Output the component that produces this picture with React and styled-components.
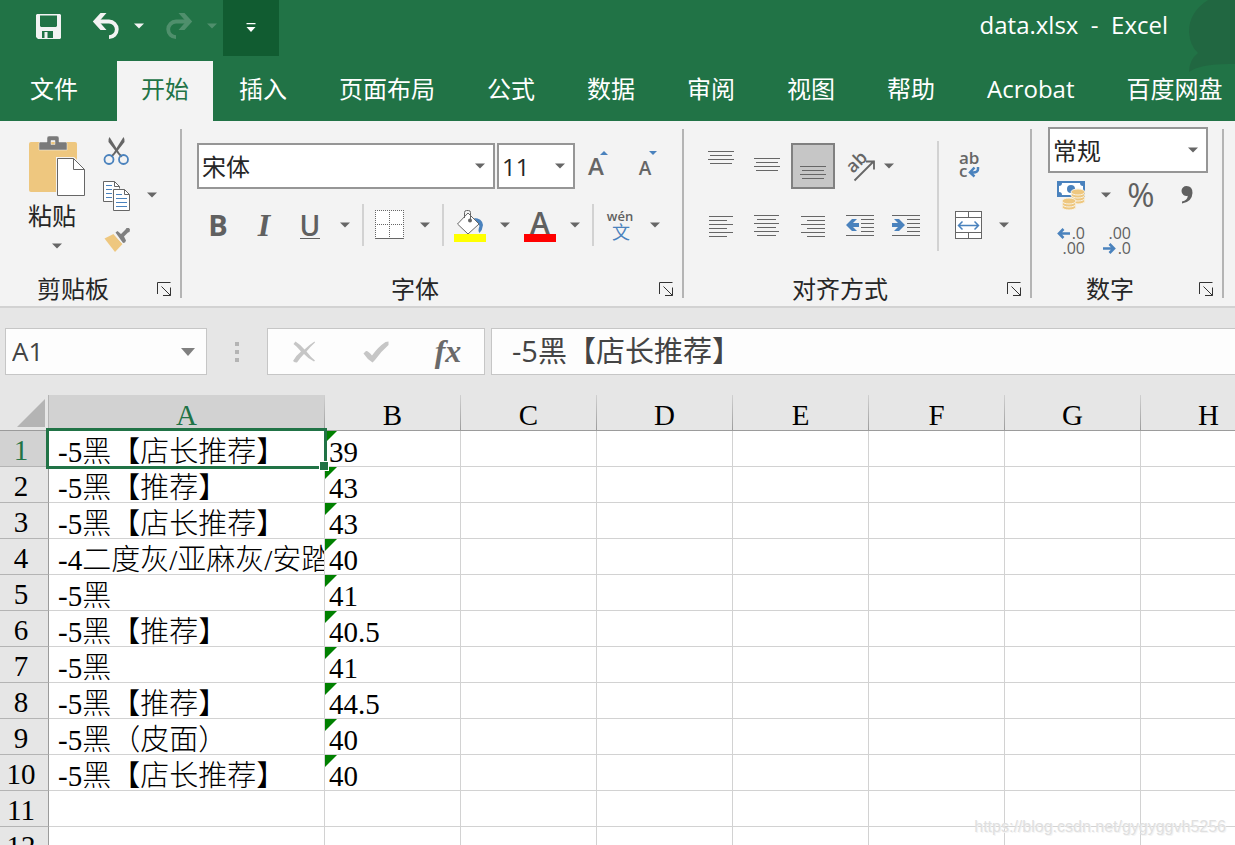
import React from 'react';
import styled, { createGlobalStyle, css } from 'styled-components';

const uiFont = `'Open Sans', 'Noto Sans CJK SC', sans-serif`;
const cellFont = `'Liberation Serif', 'Noto Sans CJK SC', serif`;

const green = '#217346';
const grey = '#666666';
const blue = '#4a82bd';
const tan = '#eec77f';

const GlobalStyle = createGlobalStyle`
  *, *::before, *::after {
    box-sizing: border-box;
  }
  body {
    margin: 0;
    background: #ffffff;
  }
  button, input, select {
    font-family: inherit;
    margin: 0;
  }
`;

const Window = styled.div`
  position: relative;
  display: flex;
  flex-direction: column;
  height: 100vh;
  overflow: hidden;
  font-family: ${uiFont};
  font-size: 24px;
  line-height: 32px;
  color: #262626;
`;

/* ---------- title bar and tabs ---------- */

const Header = styled.header`
  position: relative;
  flex: none;
  background: ${green};
  color: #ffffff;
`;

const Ornament = styled.svg`
  position: absolute;
  top: 0;
  right: 0;
`;

const TitleBar = styled.div`
  position: relative;
  display: flex;
  justify-content: space-between;
  height: 61px;
  padding-right: 67px;
`;

const QuickAccess = styled.div`
  display: flex;
  height: 56px;
  padding-left: 25px;
`;

const QuickButton = styled.button`
  display: flex;
  align-items: center;
  justify-content: center;
  width: ${({ $width }) => $width}px;
  height: 100%;
  margin-left: ${({ $gap = 0 }) => $gap}px;
  padding: 0 0 ${({ $dark }) => ($dark ? 0 : 4)}px;
  border: 0;
  background: ${({ $dark }) => ($dark ? '#115c31' : 'transparent')};
  opacity: ${({ disabled }) => (disabled ? 0.22 : 1)};
`;

const WindowTitle = styled.h1`
  margin: 0;
  padding-top: 9px;
  font-size: 24px;
  font-weight: 400;
  line-height: 32px;
  white-space: pre;
`;

const Tabs = styled.nav`
  position: relative;
  display: flex;
  height: 60px;
`;

const Tab = styled.a`
  padding: 0 26px;
  line-height: 56px;
  color: #ffffff;
  text-decoration: none;
  white-space: nowrap;
  ${({ $file }) =>
    $file &&
    css`
      padding: 0 39px 0 30px;
    `}
  ${({ $active }) =>
    $active &&
    css`
      padding: 0 24px;
      background: #f3f3f3;
      color: ${green};
    `}
`;

/* ---------- ribbon ---------- */

const Ribbon = styled.div`
  display: flex;
  flex: none;
  height: 187px;
  background: #f3f3f3;
  border-bottom: 2px solid #d2d2d2;
`;

const Group = styled.section`
  display: flex;
  flex: none;
  flex-direction: column;
`;

const GroupBody = styled.div`
  display: flex;
  flex: 1;
  align-items: flex-start;
  padding: ${({ $padding }) => $padding};
`;

const GroupFooter = styled.div`
  display: flex;
  align-items: center;
  height: 34px;
`;

const GroupLabel = styled.span`
  flex: 1;
  text-align: center;
`;

const Launcher = styled.button`
  display: flex;
  align-items: center;
  width: 34px;
  height: 34px;
  padding: 0 0 0 11px;
  border: 0;
  background: none;
`;

const Divider = styled.div`
  flex: none;
  width: 2px;
  margin: 8px 0;
  background: #b4b4b4;
`;

const Separator = styled.div`
  flex: none;
  width: 2px;
  height: ${({ $tall }) => ($tall ? '110px' : '42px')};
  margin: ${({ $tall }) => ($tall ? '0 7px 0 10px' : '0 3px 0 5px')};
  background: #d2d2d2;
`;

const Rows = styled.div`
  display: flex;
  flex-direction: column;
  gap: ${({ $gap = 0 }) => $gap}px;
`;

const Row = styled.div`
  display: flex;
  align-items: center;
  gap: ${({ $gap = 0 }) => $gap}px;
`;

const AlignRows = styled(Rows)`
  padding-top: 2px;
`;

const ToolButton = styled.button`
  display: flex;
  flex: none;
  align-items: center;
  justify-content: center;
  width: 46px;
  height: ${({ $short }) => ($short ? 44 : 46)}px;
  padding: 0;
  border: 0;
  background: none;
  color: #606060;
  line-height: 32px;
  ${({ $pressed }) =>
    $pressed &&
    css`
      width: 44px;
      margin-left: 2px;
      background: #c6c6c6;
      border: 2px solid #808080;
    `}
`;

const CaretButton = styled.button`
  display: flex;
  flex: none;
  align-items: center;
  justify-content: center;
  width: ${({ $narrow }) => ($narrow ? 16 : 24)}px;
  height: 44px;
  padding: 0;
  border: 0;
  background: none;
`;

const CopyMenu = styled(CaretButton)`
  margin: 38px 0 0 8px;
`;

const Bold = styled.span`
  font-size: 29px;
  font-weight: 700;
`;

const Italic = styled.span`
  font-family: 'Liberation Serif', serif;
  font-size: 32px;
  font-style: italic;
  font-weight: 700;
`;

const Underline = styled.span`
  font-size: 28px;
  font-weight: 600;
  line-height: 26px;
  border-bottom: 1px solid #606060;
`;

const Percent = styled.span`
  font-size: 33px;
`;

const PasteButton = styled.button`
  display: flex;
  flex-direction: column;
  align-items: flex-start;
  width: 58px;
  padding: 0;
  border: 0;
  background: none;
  color: #262626;
  font-size: 24px;
  line-height: 38px;
`;

const PasteCaret = styled.span`
  display: flex;
  align-self: center;
  align-items: center;
  height: 22px;
`;

const SmallButton = styled.button`
  display: flex;
  align-items: center;
  justify-content: center;
  width: 30px;
  height: 30px;
  padding: 0;
  border: 0;
  background: none;
`;

const FontBoxes = styled.div`
  display: flex;
  gap: 2px;
  padding-left: 2px;
`;

const SelectBox = styled.div`
  position: relative;
  width: ${({ $width }) => $width}px;
`;

const Select = styled.select`
  width: 100%;
  height: 46px;
  padding: 0 24px 0 3px;
  border: 2px solid #969696;
  border-radius: 0;
  background: #ffffff;
  color: #262626;
  font-size: 24px;
  appearance: none;
`;

const SelectCaret = styled.span`
  position: absolute;
  top: 0;
  right: 10px;
  display: flex;
  align-items: center;
  height: 100%;
  pointer-events: none;
`;

/* ---------- formula bar ---------- */

const FormulaBar = styled.div`
  display: flex;
  flex: none;
  padding: 20px 0 20px 5px;
  background: #e6e6e6;
`;

const BarBox = styled.div`
  display: flex;
  align-items: center;
  height: 47px;
  border: 1px solid #c6c6c6;
  background: #fdfdfd;
  ${({ $kind }) =>
    $kind === 'name' &&
    css`
      width: 202px;
    `}
  ${({ $kind }) =>
    $kind === 'buttons' &&
    css`
      width: 218px;
      margin-right: 6px;
      justify-content: space-around;
    `}
  ${({ $kind }) =>
    $kind === 'formula' &&
    css`
      flex: 1;
      border-right: 0;
    `}
`;

const BarInput = styled.input`
  flex: 1;
  width: 0;
  min-width: 0;
  height: 45px;
  padding: ${({ $large }) => ($large ? '0 0 5px 20px' : '0 0 1px 6px')};
  border: 0;
  background: none;
  color: #444444;
  font-size: ${({ $large }) => ($large ? 29 : 26)}px;
`;

const BarButton = styled.button`
  display: flex;
  align-items: center;
  justify-content: center;
  width: ${({ $narrow }) => ($narrow ? 36 : 60)}px;
  height: 45px;
  padding: 0;
  border: 0;
  background: none;
`;

const Fx = styled.span`
  font-family: 'Liberation Serif', serif;
  font-size: 32px;
  font-style: italic;
  font-weight: 700;
  color: #6a6a6a;
`;

const Grip = styled.div`
  display: flex;
  flex-direction: column;
  align-items: center;
  justify-content: center;
  gap: 4px;
  width: 60px;
`;

const Dot = styled.span`
  width: 4px;
  height: 4px;
  background: #b4b4b4;
`;

/* ---------- sheet ---------- */

const SheetArea = styled.main`
  flex: 1;
  min-height: 0;
  overflow: hidden;
`;

const Sheet = styled.table`
  width: 1413px;
  table-layout: fixed;
  border-collapse: separate;
  border-spacing: 0;
  font-family: ${cellFont};
  font-size: 29px;
  font-weight: 300;
  color: #000000;
`;

const Col = styled.col`
  width: ${({ $width }) => $width}px;
`;

const Corner = styled.td`
  height: 36px;
  padding: 0;
  background: #e6e6e6;
  border-right: 1px solid #b4b4b4;
  border-bottom: 1px solid #9b9b9b;
`;

const CornerMark = styled.svg`
  display: block;
  margin: 0 3px 0 auto;
`;

const ColumnHead = styled.th`
  height: 36px;
  padding: 6px 0 0;
  line-height: 29px;
  font-weight: 400;
  color: ${({ $active }) => ($active ? green : '#000000')};
  background: ${({ $active }) => ($active ? '#d2d2d2' : '#e6e6e6')};
  border-right: 1px solid;
  border-image: linear-gradient(#d2d2d2, #9b9b9b) 1;
  border-bottom: 1px solid #9b9b9b;
`;

const RowHead = styled.th`
  height: 36px;
  padding: 4px 6px 0 0;
  line-height: 31px;
  font-weight: 400;
  text-align: center;
  color: ${({ $active }) => ($active ? green : '#000000')};
  background: ${({ $active }) => ($active ? '#d2d2d2' : '#e6e6e6')};
  border-right: 1px solid #9b9b9b;
  border-bottom: 1px solid #b4b4b4;
`;

const Cell = styled.td`
  position: relative;
  height: 36px;
  padding: 0;
  border-right: 1px solid #d2d2d2;
  border-bottom: 1px solid #d2d2d2;
`;

const CellText = styled.div`
  height: 35px;
  padding: 4px 0 0 ${({ $first }) => ($first ? 9 : 4)}px;
  line-height: 34px;
  overflow: hidden;
  white-space: nowrap;
`;

const ErrorMark = styled.span`
  position: absolute;
  top: 0;
  left: 0;
  border-top: 12px solid #008000;
  border-right: 12px solid transparent;
`;

const Selection = styled.div`
  position: absolute;
  z-index: 1;
  inset: -3px;
  border: 3px solid ${green};
`;

const FillHandle = styled.span`
  position: absolute;
  right: -5px;
  bottom: -5px;
  width: 10px;
  height: 10px;
  border: 1px solid #ffffff;
  background: ${green};
`;

const Watermark = styled.div`
  position: absolute;
  right: 9px;
  bottom: 8px;
  font-family: 'Liberation Sans', sans-serif;
  font-size: 16px;
  line-height: 20px;
  color: #e0e0e0;
  text-shadow: 1px 1px 0 #f4f4f4;
`;

/* ---------- icons ---------- */

const Caret = ({ color = grey }) => (
  <svg width="10" height="6" viewBox="0 0 10 6">
    <path d="M0 0.5h10L5 5.5z" fill={color} />
  </svg>
);

const SaveIcon = () => (
  <svg width="25" height="25" viewBox="0 0 25 25">
    <path
      fillRule="evenodd"
      fill="#f3f3f3"
      d="M1 0h23l1 1v23l-1 1H2l-2-2V1zM4 1.500v10.500l1 1h15l1-1V1.500zM6 17v7h2.500v-6h3v6H17v-7z"
    />
  </svg>
);

const UndoIcon = ({ flip }) => (
  <svg width="28" height="28" viewBox="0 0 28 28" fill="none" stroke="#f3f3f3" strokeWidth="3.800">
    <g transform={flip ? 'translate(28 0) scale(-1 1)' : undefined}>
      <path d="M3.500 9.500H17a7.800 7.800 0 0 1 0 15.600" />
      <path d="M0.800 9.500 8.500 1h6L7 9.500l7.500 8.500h-6z" fill="#f3f3f3" stroke="none" />
    </g>
  </svg>
);

const CustomizeIcon = () => (
  <svg width="10" height="10" viewBox="0 0 10 10" fill="#ffffff">
    <path d="M0.500 0h9v1.200h-9zM0.500 4h9L5 9z" />
  </svg>
);

const LauncherIcon = () => (
  <svg width="15" height="15" viewBox="0 0 15 15" fill="none" stroke="#333333">
    <path d="M0.500 12V0.500H13.500M13.500 5.500v8H6M4.500 4.500l9 9" />
  </svg>
);

const PasteIcon = () => (
  <svg width="58" height="62" viewBox="0 0 58 62">
    <rect x="1" y="7" width="48" height="50" rx="2" fill={tan} />
    <path
      fillRule="evenodd"
      d="M11 15V8.500q0-1.500 1.500-1.500H19V3q0-2 2-2h8q2 0 2 2v4h6.500q1.500 0 1.500 1.500V15zM23 5.500h4v4h-4z"
      fill="#7a7a7a"
      stroke="#f3f3f3"
      strokeWidth="0.500"
    />
    <path d="M28 22h18l12 12v28H28z" fill="#f3f3f3" />
    <path d="M29.500 23.500h16l11 11v26h-27z" fill="#ffffff" stroke={grey} />
    <path d="M45.500 23.500v11h11" fill="none" stroke={grey} />
  </svg>
);

const CutIcon = () => (
  <svg width="30" height="30" viewBox="0 0 30 30">
    <path d="M7.500 1 17.500 17l3 3-1.500 1.500-3.500-4L6.500 6Q6 3 7.500 1z" fill={grey} />
    <path d="M21.500 1 11.500 17l-3 3 1.500 1.500 3.500-4L22.500 6Q23 3 21.500 1z" fill={grey} />
    <circle cx="7" cy="23.500" r="4.500" fill="none" stroke={blue} strokeWidth="1.800" />
    <circle cx="21.500" cy="23.500" r="4.500" fill="none" stroke={blue} strokeWidth="1.800" />
  </svg>
);

const CopyIcon = () => (
  <svg width="30" height="32" viewBox="0 0 30 32">
    <path d="M1.500 1.500h11l5 5v15h-16z" fill="#ffffff" stroke={grey} />
    <path d="M12.500 1.500v5h5" fill="none" stroke={grey} />
    <path d="M4 5.500h6M4 9.500h6M4 13.500h6M4 17.500h6" stroke={blue} />
    <path d="M10.500 8.500h18v22h-18z" fill="#f3f3f3" />
    <path d="M11.500 9.500h11l5 5v16h-16z" fill="#ffffff" stroke={grey} />
    <path d="M22.500 9.500v5h5" fill="none" stroke={grey} />
    <path d="M14 14.500h6M14 18.500h11M14 22.500h11M14 26.500h11" stroke={blue} />
  </svg>
);

const BrushIcon = () => (
  <svg width="30" height="30" viewBox="0 0 30 30">
    <path d="m2.500 12.500 9-4.500 9 10L13 26z" fill={tan} />
    <path
      d="m13.500 6.500 2-1.500 3.500 3 4.500-4.500 1-1.500h2.500l1 1.500-.5 2.500-1.500.5L22 10.500l2 4-1 2-2 .5z"
      fill="#808080"
    />
    <path d="m11.500 7.500 10 11" stroke="#f3f3f3" strokeWidth="1" />
  </svg>
);

const BordersIcon = () => (
  <svg width="30" height="30" viewBox="0 0 30 30" fill="none" stroke={grey}>
    <rect x="0.500" y="0.500" width="28" height="28" fill="#ffffff" stroke="none" />
    <path d="M0 0.500h29M0 14.500h29M0.500 0v28M14.500 0v28M28.500 0v28" strokeDasharray="1 1" />
    <path d="M0 28.500h29" />
  </svg>
);

const FillIcon = () => (
  <svg width="32" height="34" viewBox="0 0 32 34">
    <path d="M20 10q8 0 9 7-.5 5-3.500 8-2-2 0-7z" fill={blue} />
    <path d="M14 5 25 16 14 26 3.500 16z" fill="#ffffff" stroke={grey} />
    <path d="M10.500 10V4.500q0-2 2-2h2q2 0 2 2V11" fill="none" stroke={grey} />
    <circle cx="16" cy="12.500" r="2" fill={grey} />
    <rect y="26" width="32" height="8" fill="#ffff00" />
  </svg>
);

const FontColorIcon = () => (
  <svg width="32" height="34" viewBox="0 0 32 34" overflow="visible">
    <text x="16" y="26" textAnchor="middle" fontFamily="Open Sans" fontWeight="600" fontSize="30" fill="#606060">
      A
    </text>
    <rect y="26" width="32" height="8" fill="#ff0000" />
  </svg>
);

const FontSizeIcon = ({ shrink }) => (
  <svg width="32" height="32" viewBox="0 0 32 32">
    <text
      x={shrink ? 17 : 14}
      y="25"
      textAnchor="middle"
      fontFamily="Open Sans"
      fontWeight="600"
      fontSize={shrink ? 19 : 24}
      fill={grey}
    >
      A
    </text>
    <path d={shrink ? 'M21 1h8l-4 4z' : 'M18 5h8l-4-4z'} fill={blue} />
  </svg>
);

const PhoneticIcon = () => (
  <svg width="32" height="34" viewBox="0 0 32 34" overflow="visible">
    <text x="16" y="13" textAnchor="middle" fontFamily="Open Sans" fontWeight="600" fontSize="13" fill="#606060">
      wén
    </text>
    <text x="17" y="31" textAnchor="middle" fontFamily="Noto Sans CJK SC" fontSize="18" fill={blue}>
      文
    </text>
  </svg>
);

const LinesIcon = ({ lines, top, arrow }) => (
  <svg width="32" height="32" viewBox="0 0 32 32" overflow="visible">
    {lines.map(([from, to], i) => (
      <rect key={i} x={from} y={top + i * 4} width={to - from} height="1" fill={grey} />
    ))}
    {arrow === 'left' && <path d="M4 16l6-6h5l-4 4h6v4h-6l4 4h-5z" fill={blue} />}
    {arrow === 'right' && <path d="M17 16l-6-6H6l4 4H4v4h6l-4 4h5z" fill={blue} />}
  </svg>
);

const OrientationIcon = () => (
  <svg width="32" height="32" viewBox="0 0 32 32" overflow="visible">
    <text x="11" y="24" transform="rotate(-45 11 24)" fontFamily="Open Sans" fontWeight="600" fontSize="18" fill={grey}>
      ab
    </text>
    <path d="M12.500 30.500 32 11M24 11.500h8v8" fill="none" stroke={grey} strokeWidth="1.800" />
  </svg>
);

const WrapIcon = () => (
  <svg width="32" height="32" viewBox="0 0 32 32" overflow="visible">
    <text x="6" y="14" fontFamily="Open Sans" fontWeight="600" fontSize="17" fill={grey}>
      ab
    </text>
    <text x="6" y="27" fontFamily="Open Sans" fontWeight="600" fontSize="17" fill={grey}>
      c
    </text>
    <path d="M25 17v2q0 3.500-5 3.500h-2M21.500 17.500 17 22.500l4.500 4" fill="none" stroke={blue} strokeWidth="2.500" />
  </svg>
);

const MergeIcon = () => (
  <svg width="28" height="30" viewBox="0 0 28 30" fill="none" stroke={grey}>
    <rect x="0.500" y="1.500" width="26" height="27" fill="#ffffff" />
    <path d="M0.500 7.500h26M0.500 22.500h26M13.500 1.500v6M13.500 22.500v6" />
    <path d="M4 15.500h19M7.500 11.500l-4 4 4 4M19.500 11.500l4 4-4 4" stroke={blue} strokeWidth="1.500" />
  </svg>
);

const Coins = ({ x, y, count }) => (
  <g transform={`translate(${x} ${y})`}>
    {[...Array(count)].map((_, i) => (
      <ellipse
        key={i}
        cx="7"
        cy={(count - i) * 3}
        rx="7"
        ry="3"
        fill={tan}
        stroke="#f8f2e4"
        strokeWidth="1"
      />
    ))}
  </g>
);

const CurrencyIcon = () => (
  <svg width="30" height="30" viewBox="0 0 30 30">
    <rect x="1" y="1" width="28" height="16" fill={blue} />
    <path d="M6 3h18q0 3 3 3v6q-3 0-3 3H6q0-3-3-3V6q3 0 3-3z" fill="#ffffff" />
    <circle cx="15" cy="9" r="4" fill={blue} />
    <Coins x={15} y={9} count={4} />
    <Coins x={6} y={18} count={3} />
  </svg>
);

const CommaIcon = () => (
  <svg width="14" height="20" viewBox="0 0 14 20">
    <path
      d="M1.500 6a5 5 0 0 1 5-5q6 0 6 7-.5 9-10.500 10.500v-2q5.500-1 5.800-5.700A5 5 0 0 1 1.500 6z"
      fill="#606060"
    />
  </svg>
);

const DecimalIcon = ({ decrease }) => (
  <svg
    width="30"
    height="32"
    viewBox="0 0 30 32"
    overflow="visible"
    fontFamily="Open Sans"
    fontSize="16"
    fill="#606060"
  >
    <text x="29" y="16" textAnchor="end">
      {decrease ? '.00' : '.0'}
    </text>
    <text x="29" y="31" textAnchor="end">
      {decrease ? '.0' : '.00'}
    </text>
    <path
      d={
        decrease
          ? 'M1 25.500h11M7.500 21l4.500 4.500-4.500 4.500'
          : 'M3 10.500h11M7.500 6 3 10.500 7.500 15'
      }
      fill="none"
      stroke={blue}
      strokeWidth="2.600"
    />
  </svg>
);

const CancelIcon = () => (
  <svg width="24" height="24" viewBox="0 0 24 24">
    <path
      d="M3.500 1.500Q9 5 12.500 9.500 17 5 22.500 1.500l.5 1Q18.500 6.500 14.500 11.500q4.500 6 8.500 9l-1 1Q16 18.500 12 14q-4 4-7 8.500-2.500 0-4-1.500Q4 15.500 9 11.500 5.500 7 1.500 4z"
      fill="#c6c6c6"
    />
  </svg>
);

const EnterIcon = () => (
  <svg width="26" height="22" viewBox="0 0 26 22">
    <path d="M0.500 12.500 3 10q2-.5 6 4.500Q15 6 22.500 1l3-.5V4Q17.500 11 12 19l-2.500 2.500Q4 18 0.500 12.500z" fill="#c6c6c6" />
  </svg>
);

/* ---------- data ---------- */

const tabs = ['文件', '开始', '插入', '页面布局', '公式', '数据', '审阅', '视图', '帮助', 'Acrobat', '百度网盘'];
const columns = ['A', 'B', 'C', 'D', 'E', 'F', 'G', 'H', 'I'];

const data = [
  ['-5黑【店长推荐】', '39'],
  ['-5黑【推荐】', '43'],
  ['-5黑【店长推荐】', '43'],
  ['-4二度灰/亚麻灰/安踏', '40'],
  ['-5黑', '41'],
  ['-5黑【推荐】', '40.5'],
  ['-5黑', '41'],
  ['-5黑【推荐】', '44.5'],
  ['-5黑（皮面）', '40'],
  ['-5黑【店长推荐】', '40'],
  [],
  [],
];

const wide = [4, 30];
const narrow = [6, 28];
const indentLines = [[4, 32], [19, 32], [19, 32], [19, 32], [19, 32], [4, 32]];

/* ---------- components ---------- */

const Dropdown = ({ label, width, value }) => (
  <SelectBox $width={width}>
    <Select aria-label={label} defaultValue={value}>
      <option>{value}</option>
    </Select>
    <SelectCaret>
      <Caret />
    </SelectCaret>
  </SelectBox>
);

const RibbonGroup = ({ label, padding, children }) => (
  <>
    <Group>
      <GroupBody $padding={padding}>{children}</GroupBody>
      <GroupFooter>
        <GroupLabel>{label}</GroupLabel>
        <Launcher aria-label={`${label}设置`}>
          <LauncherIcon />
        </Launcher>
      </GroupFooter>
    </Group>
    <Divider />
  </>
);

const Menu = ({ label, slim }) => (
  <CaretButton aria-label={label} $narrow={slim}>
    <Caret />
  </CaretButton>
);

const ClipboardGroup = () => (
  <RibbonGroup label="剪贴板" padding="14px 16px 0 28px">
    <Row $gap={16}>
      <PasteButton>
        <PasteIcon />
        粘贴
        <PasteCaret>
          <Caret />
        </PasteCaret>
      </PasteButton>
      <Rows $gap={15}>
        <SmallButton aria-label="剪切">
          <CutIcon />
        </SmallButton>
        <SmallButton aria-label="复制">
          <CopyIcon />
        </SmallButton>
        <SmallButton aria-label="格式刷">
          <BrushIcon />
        </SmallButton>
      </Rows>
    </Row>
    <CopyMenu aria-label="复制选项">
      <Caret />
    </CopyMenu>
  </RibbonGroup>
);

const FontGroup = () => (
  <RibbonGroup label="字体" padding="22px 15px 0 13px">
    <Rows $gap={13}>
      <Row>
        <FontBoxes>
          <Dropdown label="字体" width={298} value="宋体" />
          <Dropdown label="字号" width={78} value="11" />
        </FontBoxes>
        <ToolButton aria-label="增大字号">
          <FontSizeIcon />
        </ToolButton>
        <ToolButton aria-label="减小字号">
          <FontSizeIcon shrink />
        </ToolButton>
      </Row>
      <Row>
        <ToolButton aria-label="加粗">
          <Bold>B</Bold>
        </ToolButton>
        <ToolButton aria-label="倾斜">
          <Italic>I</Italic>
        </ToolButton>
        <ToolButton aria-label="下划线">
          <Underline>U</Underline>
        </ToolButton>
        <Menu label="下划线选项" />
        <Separator />
        <ToolButton aria-label="边框">
          <BordersIcon />
        </ToolButton>
        <Menu label="边框选项" />
        <Separator />
        <ToolButton aria-label="填充颜色">
          <FillIcon />
        </ToolButton>
        <Menu label="填充颜色选项" />
        <ToolButton aria-label="字体颜色">
          <FontColorIcon />
        </ToolButton>
        <Menu label="字体颜色选项" />
        <Separator />
        <ToolButton aria-label="拼音">
          <PhoneticIcon />
        </ToolButton>
        <Menu label="拼音选项" />
      </Row>
    </Rows>
  </RibbonGroup>
);

const AlignmentGroup = () => (
  <RibbonGroup label="对齐方式" padding="20px 14px 0 13px">
    <AlignRows $gap={13}>
      <Row>
        <ToolButton aria-label="顶端对齐">
          <LinesIcon top={1} lines={[wide, narrow, wide, narrow]} />
        </ToolButton>
        <ToolButton aria-label="垂直居中">
          <LinesIcon top={8} lines={[wide, narrow, wide, narrow]} />
        </ToolButton>
        <ToolButton aria-label="底端对齐" aria-pressed="true" $pressed>
          <LinesIcon top={16} lines={[[3, 29], [5, 27], [3, 29], [5, 27]]} />
        </ToolButton>
        <ToolButton aria-label="方向">
          <OrientationIcon />
        </ToolButton>
        <Menu label="方向选项" slim />
      </Row>
      <Row>
        <ToolButton aria-label="左对齐">
          <LinesIcon top={7} lines={[[5, 29], [5, 23], [5, 29], [5, 23], [5, 29], [5, 23]]} />
        </ToolButton>
        <ToolButton aria-label="居中">
          <LinesIcon top={6} lines={[[4, 29], [7, 26], [4, 29], [7, 26], [4, 29], [7, 26]]} />
        </ToolButton>
        <ToolButton aria-label="右对齐">
          <LinesIcon top={7} lines={[[5, 29], [11, 29], [5, 29], [11, 29], [5, 29], [11, 29]]} />
        </ToolButton>
        <ToolButton aria-label="减少缩进量">
          <LinesIcon top={6} lines={indentLines} arrow="left" />
        </ToolButton>
        <ToolButton aria-label="增加缩进量">
          <LinesIcon top={6} lines={indentLines} arrow="right" />
        </ToolButton>
      </Row>
    </AlignRows>
    <Separator $tall />
    <AlignRows $gap={13}>
      <ToolButton aria-label="自动换行">
        <WrapIcon />
      </ToolButton>
      <Row>
        <ToolButton aria-label="合并后居中">
          <MergeIcon />
        </ToolButton>
        <Menu label="合并选项" />
      </Row>
    </AlignRows>
  </RibbonGroup>
);

const NumberGroup = () => (
  <RibbonGroup label="数字" padding="6px 12px 0 16px">
    <Rows>
      <Dropdown label="数字格式" width={160} value="常规" />
      <Row>
        <ToolButton aria-label="会计数字格式" $short>
          <CurrencyIcon />
        </ToolButton>
        <Menu label="会计数字格式选项" />
        <ToolButton aria-label="百分比样式" $short>
          <Percent>%</Percent>
        </ToolButton>
        <ToolButton aria-label="千位分隔样式" $short>
          <CommaIcon />
        </ToolButton>
      </Row>
      <Row>
        <ToolButton aria-label="增加小数位数" $short>
          <DecimalIcon />
        </ToolButton>
        <ToolButton aria-label="减少小数位数" $short>
          <DecimalIcon decrease />
        </ToolButton>
      </Row>
    </Rows>
  </RibbonGroup>
);

const App = () => {
  return (
    <Window>
      <GlobalStyle />
      <Header>
        <Ornament width="46" height="73" viewBox="0 0 46 73">
          <path d="M19 0Q0 12 0 32q1 14 9 21-9 7-9 19 12-9 46-8V0z" fill="#216741" />
        </Ornament>
        <TitleBar>
          <QuickAccess>
            <QuickButton aria-label="保存" $width={47}>
              <SaveIcon />
            </QuickButton>
            <QuickButton aria-label="撤消" $width={42} $gap={13}>
              <UndoIcon />
            </QuickButton>
            <QuickButton aria-label="撤消选项" $width={24}>
              <Caret color="#f3f3f3" />
            </QuickButton>
            <QuickButton aria-label="恢复" $width={42} $gap={7} disabled>
              <UndoIcon flip />
            </QuickButton>
            <QuickButton aria-label="恢复选项" $width={23} disabled>
              <Caret color="#f3f3f3" />
            </QuickButton>
            <QuickButton aria-label="自定义快速访问工具栏" $width={56} $dark>
              <CustomizeIcon />
            </QuickButton>
          </QuickAccess>
          <WindowTitle>{'data.xlsx  -  Excel'}</WindowTitle>
        </TitleBar>
        <Tabs>
          {tabs.map((tab, i) => (
            <Tab key={tab} href="#" $file={i === 0} $active={i === 1}>
              {tab}
            </Tab>
          ))}
        </Tabs>
      </Header>

      <Ribbon>
        <ClipboardGroup />
        <FontGroup />
        <AlignmentGroup />
        <NumberGroup />
      </Ribbon>

      <FormulaBar>
        <BarBox $kind="name">
          <BarInput aria-label="名称框" defaultValue="A1" />
          <BarButton aria-label="名称列表" $narrow>
            <svg width="14" height="8" viewBox="0 0 14 8">
              <path d="M0 0h14L7 8z" fill="#808080" />
            </svg>
          </BarButton>
        </BarBox>
        <Grip>
          <Dot />
          <Dot />
          <Dot />
        </Grip>
        <BarBox $kind="buttons">
          <BarButton aria-label="取消">
            <CancelIcon />
          </BarButton>
          <BarButton aria-label="输入">
            <EnterIcon />
          </BarButton>
          <BarButton aria-label="插入函数">
            <Fx>fx</Fx>
          </BarButton>
        </BarBox>
        <BarBox $kind="formula">
          <BarInput aria-label="编辑栏" defaultValue="-5黑【店长推荐】" $large />
        </BarBox>
      </FormulaBar>

      <SheetArea>
        <Sheet>
          <colgroup>
            <Col $width={49} />
            {columns.map((name, i) => (
              <Col key={name} $width={i === 0 ? 276 : 136} />
            ))}
          </colgroup>
          <thead>
            <tr>
              <Corner>
                <CornerMark width="28" height="28" viewBox="0 0 28 28">
                  <path d="M28 0v28H0z" fill="#b4b4b4" />
                </CornerMark>
              </Corner>
              {columns.map((name, i) => (
                <ColumnHead key={name} scope="col" $active={i === 0}>
                  {name}
                </ColumnHead>
              ))}
            </tr>
          </thead>
          <tbody>
            {data.map((row, r) => (
              <tr key={r}>
                <RowHead scope="row" $active={r === 0}>
                  {r + 1}
                </RowHead>
                {columns.map((name, c) => (
                  <Cell key={name}>
                    <CellText $first={c === 0}>{row[c]}</CellText>
                    {c === 1 && row[c] && <ErrorMark />}
                    {r === 0 && c === 0 && (
                      <Selection>
                        <FillHandle />
                      </Selection>
                    )}
                  </Cell>
                ))}
              </tr>
            ))}
          </tbody>
        </Sheet>
      </SheetArea>
      <Watermark>https://blog.csdn.net/gygyggvh5256</Watermark>
    </Window>
  );
};

export default App;
